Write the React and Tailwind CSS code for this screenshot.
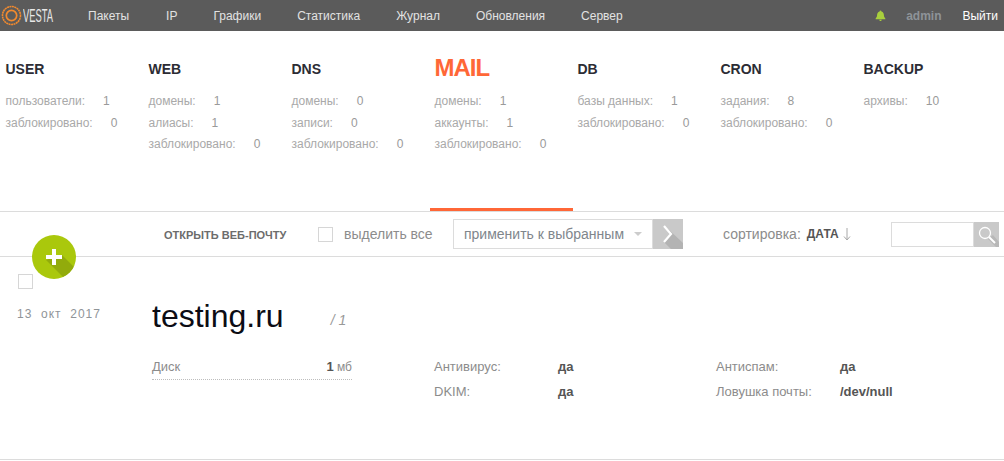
import React from "react";

const nav = [
  ["Пакеты", "mr-[37px]"],
  ["IP", "mr-[36px]"],
  ["Графики", "mr-[36px]"],
  ["Статистика", "mr-[36px]"],
  ["Журнал", "mr-[36px]"],
  ["Обновления", "mr-[36px]"],
  ["Сервер", ""],
];

const stats = [
  { t: "USER", rows: [["пользователи:", "1"], ["заблокировано:", "0"]] },
  { t: "WEB", rows: [["домены:", "1"], ["алиасы:", "1"], ["заблокировано:", "0"]] },
  { t: "DNS", rows: [["домены:", "0"], ["записи:", "0"], ["заблокировано:", "0"]] },
  { t: "MAIL", active: true, rows: [["домены:", "1"], ["аккаунты:", "1"], ["заблокировано:", "0"]] },
  { t: "DB", rows: [["базы данных:", "1"], ["заблокировано:", "0"]] },
  { t: "CRON", rows: [["задания:", "8"], ["заблокировано:", "0"]] },
  { t: "BACKUP", rows: [["архивы:", "10"]] },
];

function Stat({ s }) {
  return (
    <div className="relative w-[143px] h-[180px] pl-[4.5px] shrink-0">
      <div className={s.active ? "h-[60px] pt-[23px] text-[24px] leading-[28px] font-bold tracking-[-1px] text-[#ff6737]" : "h-[60px] pt-[30px] text-[14px] leading-[16px] font-bold text-[#2c2c34]"}>
        {s.t}
      </div>
      {s.rows.map(([a, b]) => (
        <div key={a} className="flex h-[21.5px] text-[12px] leading-[21px] text-[#a9a9a9]">
          <span>{a}</span>
          <span className="ml-[18px] text-[#9a9a9a]">{b}</span>
        </div>
      ))}
      {s.active && <div className="absolute left-0 bottom-0 w-[143px] h-[3px] bg-[#ff6737]" />}
    </div>
  );
}

function Detail({ label, value, w }) {
  return (
    <div className="flex h-[25px] text-[13px] leading-[22px]">
      <span className={w + " text-[#8c8c8c]"}>{label}</span>
      <span className="font-bold text-[#555]">{value}</span>
    </div>
  );
}

export default function App() {
  return (
    <div className="w-[1004px] h-[461px] overflow-hidden bg-white font-['Liberation_Sans',Arial,sans-serif]">
      <header className="flex items-center h-[31px] bg-[#5b5b5b] text-[12px]">
        <div className="flex items-center w-[88px] pl-[1px] shrink-0">
          <svg width="21" height="21" viewBox="0 0 21 21" fill="none">
            <circle cx="10.500" cy="10.500" r="9" stroke="#f28a2e" strokeWidth="1.600" strokeDasharray="2 0.5" />
            <circle cx="10.500" cy="10.500" r="5.200" stroke="#f28a2e" strokeWidth="1.700" />
          </svg>
          <span className="ml-[1px] inline-block origin-left scale-x-[0.52] text-[18px] leading-[20px] text-[#e8e8e8]">VESTA</span>
        </div>
        {nav.map(([n, m]) => (
          <span key={n} className={m + " text-[#e2e2e2]"}>{n}</span>
        ))}
        <svg className="ml-auto" width="11" height="11" viewBox="0 0 12 12" fill="#a8cf3d">
          <path d="M6 0.5c.6 0 1 .4 1 1 2 .5 2.7 2.2 2.7 4 0 2 .8 2.8 1.6 3.7V10H.7v-.8c.8-.9 1.6-1.7 1.6-3.7 0-1.8.7-3.500 2.700-4 0-.6.4-1 1-1zM4.700 10.500h2.600C7.300 11.400 6.700 12 6 12s-1.300-.6-1.300-1.500z" />
        </svg>
        <span className="ml-[20px] font-bold text-[#8e9398]">admin</span>
        <span className="ml-[21px] mr-[6px] text-white">Выйти</span>
      </header>

      <section className="flex h-[180px] pl-[1px] border-b border-[#dcdcdc] box-content">
        {stats.map((s) => (
          <Stat key={s.t} s={s} />
        ))}
      </section>

      <section className="relative flex items-center h-[44px] border-b border-[#dcdcdc] box-content">
        <button className="absolute left-[32px] top-[23px] z-10 w-[44px] h-[44px] rounded-full overflow-hidden bg-[#aac80c]">
          <svg width="44" height="44" viewBox="0 0 44 44">
            <path d="M30 20 L44 34 L44 44 L33 44 L14 25 Z" fill="#92ab0c" />
            <path d="M20 14h4v6h6v4h-6v6h-4v-6h-6v-4h6z" fill="#fff" />
          </svg>
        </button>
        <span className="ml-[164px] pt-[2px] w-[154px] shrink-0 text-[11px] font-bold text-[#6c6c6c]">ОТКРЫТЬ ВЕБ-ПОЧТУ</span>
        <span className="w-[15px] h-[15px] border border-[#d6d6d6] shrink-0" />
        <span className="ml-[11px] w-[109px] shrink-0 text-[14px] text-[#8c8c8c]">выделить все</span>
        <div className="flex items-center w-[200px] h-[30px] pl-[10px] border border-[#dcdcdc] text-[14px] text-[#80868c] shrink-0">
          <span>применить к выбранным</span>
          <span className="ml-[10px] w-0 h-0 border-x-[4px] border-x-transparent border-t-[4px] border-t-[#ccc]" />
        </div>
        <div className="w-[30px] h-[30px] bg-[#c9c9c9] shrink-0">
          <svg width="30" height="30" viewBox="0 0 30 30">
            <path d="M11 23 L18 15 L12 7 L30 24 L30 30 L18 30 Z" fill="#b3b3b3" />
            <path d="M11 7 L18 15 L11 23" fill="none" stroke="#fff" strokeWidth="2.200" />
          </svg>
        </div>
        <span className="ml-[40px] shrink-0 text-[14px] text-[#8c8c8c]">сортировка:</span>
        <span className="ml-[6px] shrink-0 text-[12px] font-bold text-[#555]">ДАТА</span>
        <svg className="ml-[4px] shrink-0" width="8" height="14" viewBox="0 0 8 14" fill="none" stroke="#a8a8a8">
          <path d="M4 1v11.500M1 9.500l3 3.500 3-3.500" />
        </svg>
        <div className="ml-auto mr-[5px] flex h-[25px]">
          <div className="w-[83px] h-[25px] border border-[#dcdcdc]" />
          <div className="w-[25px] h-[25px] bg-[#c9c9c9]">
            <svg width="25" height="25" viewBox="0 0 25 25" fill="none">
              <path d="M14 17 L19 13 L25 20 V25 H22 Z" fill="#b8b8b8" />
              <circle cx="11" cy="11" r="5.500" stroke="#fff" strokeWidth="1.300" />
              <path d="M15 15 L21 21" stroke="#fff" strokeWidth="2" />
            </svg>
          </div>
        </div>
      </section>

      <section className="flex h-[202px] border-b border-[#dcdcdc] box-content">
        <div className="w-[152px] shrink-0 pl-[18px] pt-[17px]">
          <div className="w-[15px] h-[15px] border border-[#d6d6d6]" />
          <div className="mt-[17px] ml-[-1px] text-[12px] leading-[16px] tracking-[1px] text-[#8f9498] whitespace-pre">13  окт  2017</div>
        </div>
        <div className="pt-[39px]">
          <div className="flex items-start h-[52px]">
            <span className="text-[32px] leading-[40px] text-[#0c0c14]">testing.ru</span>
            <span className="ml-[47px] mt-[16px] text-[14px] leading-[16px] italic text-[#999]">/ 1</span>
          </div>
          <div className="flex pt-[8px]">
            <div className="w-[200px] h-[24px] flex justify-between border-b border-dotted border-[#bdbdbd] text-[13px] leading-[22px] text-[#8c8c8c]">
              <span>Диск</span>
              <span className="text-[12px]"><b className="text-[13px] text-[#555]">1</b> мб</span>
            </div>
            <div className="ml-[82px] w-[282px]">
              <Detail label="Антивирус:" value="да" w="w-[124px]" />
              <Detail label="DKIM:" value="да" w="w-[124px]" />
            </div>
            <div>
              <Detail label="Антиспам:" value="да" w="w-[124px]" />
              <Detail label="Ловушка почты:" value="/dev/null" w="w-[124px]" />
            </div>
          </div>
        </div>
      </section>
    </div>
  );
}
